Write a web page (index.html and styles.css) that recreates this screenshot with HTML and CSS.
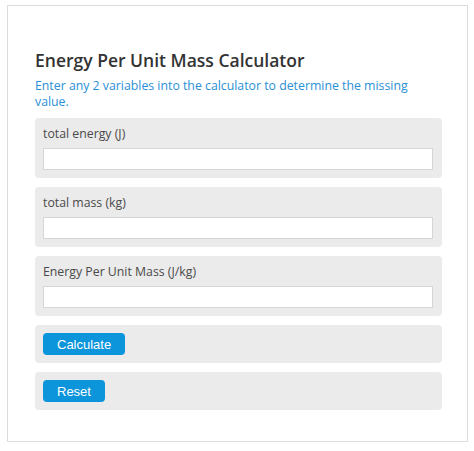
FILE: index.html
```html
<!DOCTYPE html>
<html>
<head>
<meta charset="utf-8">
<link rel="stylesheet" href="styles.css">
</head>
<body>
<div class="card">
  <h1 class="title">Energy Per Unit Mass Calculator</h1>
  <p class="intro">Enter any 2 variables into the calculator to determine the missing value.</p>
  <div class="group">
    <label class="label">total energy (J)</label>
    <input class="field" type="text">
  </div>
  <div class="group">
    <label class="label">total mass (kg)</label>
    <input class="field" type="text">
  </div>
  <div class="group">
    <label class="label">Energy Per Unit Mass (J/kg)</label>
    <input class="field" type="text">
  </div>
  <div class="group group-btn">
    <button class="btn">Calculate</button>
  </div>
  <div class="group group-btn">
    <button class="btn">Reset</button>
  </div>
</div>
</body>
</html>
```
FILE: styles.css
```css
html, body {
  margin: 0;
  padding: 0;
  background: #ffffff;
}
body {
  padding: 5px 7px 0 7px;
  font-family: "Open Sans", "DejaVu Sans", sans-serif;
}
.card {
  border: 1px solid #dcdcdc;
  padding: 42px 25px 31px 27px;
  box-sizing: border-box;
  width: 461px;
}
.title {
  margin: 0;
  font-size: 17.5px;
  font-weight: 600;
  color: #333333;
  line-height: 24px;
}
.intro {
  margin: 6px 0 8px 0;
  padding-right: 20px;
  font-size: 12.3px;
  line-height: 16px;
  color: #2a8fd6;
}
.group {
  background: #ebebeb;
  border-radius: 4px;
  padding: 7px 9px 8px 8px;
  margin-bottom: 9px;
  display: flex;
  flex-direction: column;
}
.group:last-child {
  margin-bottom: 0;
}
.label {
  font-size: 12.3px;
  line-height: 18px;
  color: #4a4a4a;
  margin: 0 0 5px 0;
}
.field {
  height: 22px;
  box-sizing: border-box;
  border: 1px solid #d6d6d6;
  background: #ffffff;
  margin: 0;
  padding: 2px 4px;
}
.group-btn {
  flex-direction: row;
  padding-top: 8px;
  padding-bottom: 8px;
}
.btn {
  font-family: "Liberation Sans", Arial, sans-serif;
  font-size: 13px;
  color: #ffffff;
  background: #0c95db;
  border: none;
  border-radius: 4px;
  height: 22px;
  padding: 0 14px;
  margin: 0;
}
```
